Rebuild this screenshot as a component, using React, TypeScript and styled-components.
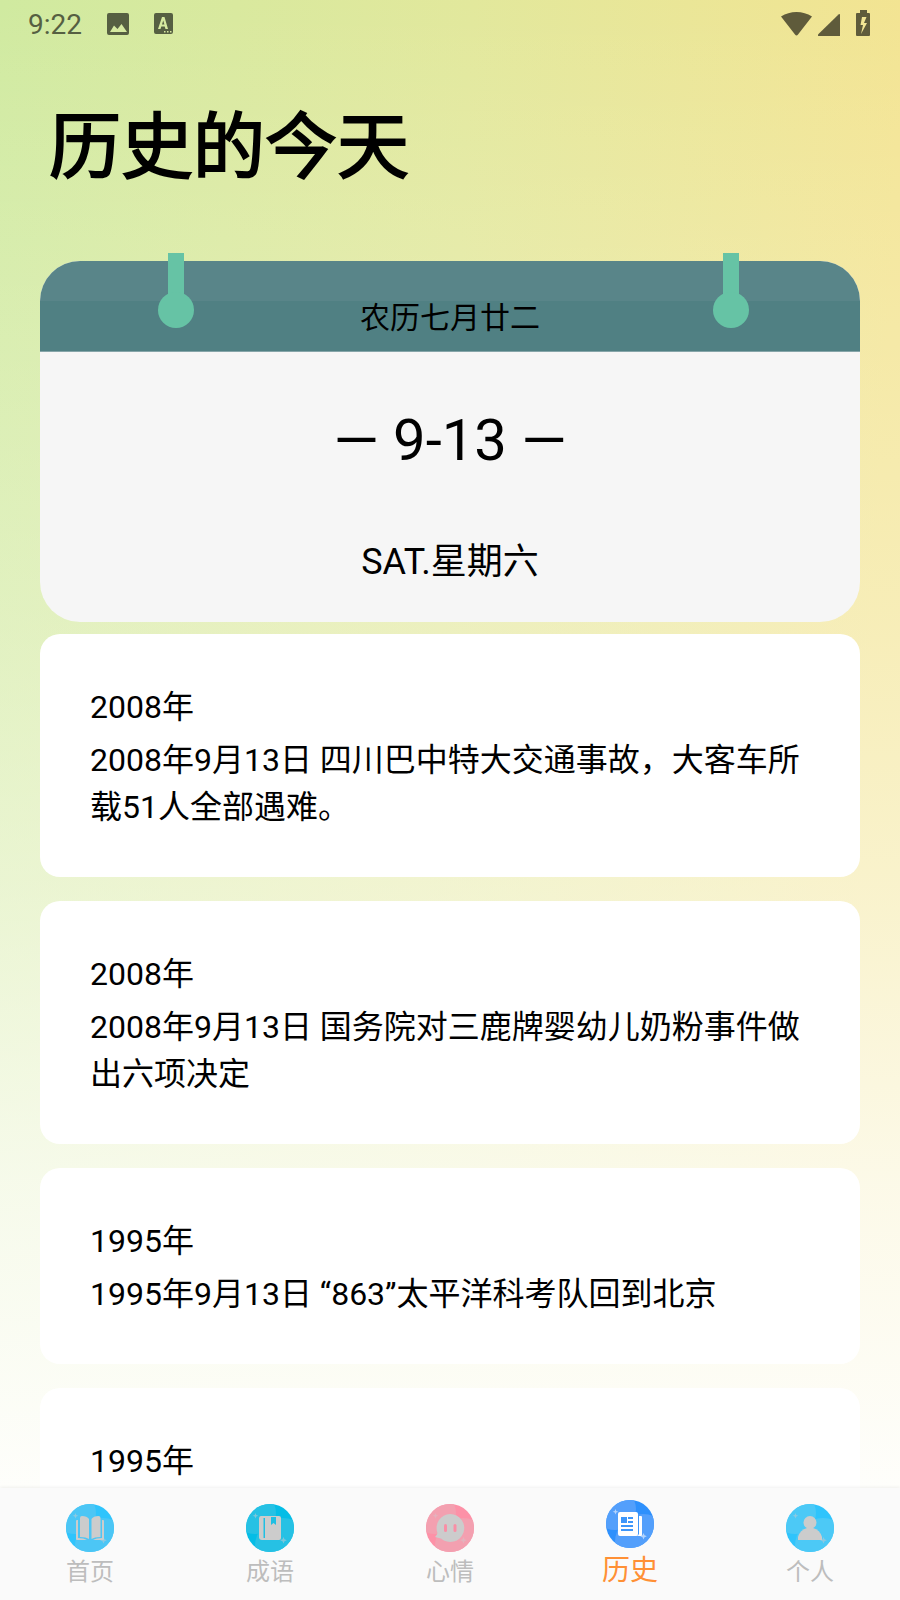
import React from "react";
import styled, { createGlobalStyle } from "styled-components";

const GlobalStyle = createGlobalStyle`
  * { box-sizing: border-box; }
  body {
    margin: 0;
    color: #000;
    font-family: Roboto, "Noto Sans CJK SC", sans-serif;
  }
`;

const Screen = styled.div`
  height: 100vh;
  display: flex;
  flex-direction: column;
  overflow: hidden;
  background:
    linear-gradient(180deg, rgba(254, 254, 251, 0) 0%, rgba(254, 254, 251, 0.14) 15%, rgba(254, 254, 251, 0.36) 39%, rgba(254, 254, 251, 0.56) 56%, rgba(254, 254, 251, 0.82) 74%, rgba(254, 254, 251, 1) 93%),
    linear-gradient(93deg, #d0eaa0 0%, #e2e89c 48%, #f3e492 92%);
`;

const StatusBar = styled.header`
  flex: none;
  height: 48px;
  padding: 0 24px 0 28px;
  display: flex;
  align-items: center;
  justify-content: space-between;
`;

const Notifications = styled.div`
  display: flex;
  align-items: center;
  gap: 24px;
  color: #565f42;
`;

const Indicators = styled.div`
  display: flex;
  align-items: flex-end;
  gap: 6px;
  padding-bottom: 2px;
  color: #5f5b3b;
`;

const Clock = styled.time`
  padding-top: 2px;
  font-size: 28px;
  line-height: 32px;
`;

const Title = styled.h1`
  flex: none;
  margin: 0;
  padding: 46px 49px 59px;
  font-size: 72px;
  font-weight: 400;
  line-height: 108px;
  -webkit-text-stroke: 2px #000;
`;

const Feed = styled.main`
  flex: 1;
  min-height: 0;
  overflow: hidden;
  padding: 0 40px;
  display: flex;
  flex-direction: column;
  gap: 24px;
`;

const Calendar = styled.section`
  flex: none;
  position: relative;
  margin: 0 40px 12px;
  border-radius: 40px;
  background: #f6f6f6;
  text-align: center;
`;

const CalendarHead = styled.div`
  height: 91px;
  padding-top: 34px;
  border-radius: 40px 40px 0 0;
  border-bottom: 1px solid #86a5a9;
  background: linear-gradient(#598589 40px, #508083 40px);
  font-size: 30px;
  line-height: 46px;
`;

const Pin = styled.span<{ $side: "left" | "right" }>`
  position: absolute;
  top: -8px;
  ${(p) => (p.$side === "left" ? "left: 118px" : "right: 111px")};
  display: flex;
  flex-direction: column;
  align-items: center;
  &::before {
    content: "";
    width: 16px;
    height: 44px;
    background: #66c3a5;
  }
  &::after {
    content: "";
    width: 36px;
    height: 36px;
    margin-top: -5px;
    border-radius: 50%;
    background: #66c3a5;
  }
`;

const DateText = styled.h2`
  margin: 0;
  padding-top: 46px;
  font-size: 58px;
  font-weight: 400;
  line-height: 84px;
`;

const Weekday = styled.p`
  margin: 0;
  padding: 53px 0 33px;
  font-size: 36px;
  line-height: 54px;
`;

const Event = styled.article`
  flex: none;
  padding: 50px 50px 46px;
  border-radius: 20px;
  background: #fff;
  font-size: 32px;
  line-height: 47px;
`;

const EventYear = styled.h2`
  margin: 0 0 6px;
  font-size: 32px;
  font-weight: 400;
`;

const EventText = styled.p`
  margin: 0;
`;

const TabBar = styled.nav`
  flex: none;
  height: 112px;
  display: flex;
  background: #fafafa;
  box-shadow: 0 -1px 3px rgba(0, 0, 0, 0.06);
`;

const Tab = styled.button<{ $active: boolean }>`
  flex: 1;
  padding: ${(p) => (p.$active ? 12 : 16)}px 0 0;
  border: 0;
  background: none;
  display: flex;
  flex-direction: column;
  align-items: center;
  gap: 2px;
  color: ${(p) => (p.$active ? "#ff9035" : "#bdbdbd")};
  font-family: inherit;
  font-size: ${(p) => (p.$active ? 28 : 24)}px;
  line-height: ${(p) => (p.$active ? 42 : 36)}px;
`;

type BadgeProps = { name: string; base: string; tint: string; spark: string; children: React.ReactNode };

function Badge({ name, base, tint, spark, children }: BadgeProps) {
  const id = `badge-${name}`;
  return (
    <svg width="48" height="48" viewBox="0 0 48 48" aria-hidden="true">
      <clipPath id={id}><circle cx="24" cy="24" r="24" /></clipPath>
      <g clipPath={`url(#${id})`}>
        <rect width="48" height="48" fill={base} />
        <circle cx="9" cy="9" r="21" fill={tint} />
        <circle cx="37" cy="42" r="28" fill={tint} />
      </g>
      <path d="M9.5 9l.8 2 2 .8-2 .8-.8 2-.8-2-2-.8 2-.8z" fill={spark} />
      <path d="M37.500 33l1 2.300 2.300 1-2.300 1-1 2.300-1-2.300-2.300-1 2.300-1z" fill={spark} />
      {children}
    </svg>
  );
}

const HomeIcon = () => (
  <Badge name="home" base="#2fc4fc" tint="#4cc6f5" spark="#8cc9e2">
    <g fill="#ccc">
      <path d="M14 14q0-2 2-2 5 0 7 3v20q-3-2-9-2z" />
      <path d="M34.500 14q0-2-2-2-5 0-7 3v20q3-2 9-2z" />
      <path d="M10 17q0-1 1-1h1v18q6 0 9 2H11q-1 0-1-1z" />
      <path d="M38 17q0-1-1-1h-1v18q-6 0-9 2h10q1 0 1-1z" />
    </g>
  </Badge>
);

const IdiomIcon = () => (
  <Badge name="idiom" base="#04bde6" tint="#26c1e4" spark="#7cc6da">
    <path fill="#ccc" d="M15 12h18q2 0 2 2v20q0 2-2 2H16q-3 0-3-3V15q0-3 2-3z" />
    <path fill="#1fbfe3" d="M17.500 14h1.500v20h-1.500zM25 13h5v8l-2.500-2-2.500 2z" />
  </Badge>
);

const MoodIcon = () => (
  <Badge name="mood" base="#fd91a7" tint="#f3a0b0" spark="#e3b2bd">
    <path fill="#ccc" d="M24 10a14 14 0 1 1-9 24.500L9 33q2-2 2.500-4A14 14 0 0 1 24 10z" />
    <rect x="18" y="20" width="3" height="8" rx="1.500" fill="#f98fa6" />
    <rect x="27.500" y="20" width="3" height="8" rx="1.500" fill="#f98fa6" />
  </Badge>
);

const HistoryIcon = () => (
  <Badge name="history" base="#2e90fc" tint="#539ffb" spark="#b3d4fd">
    <path fill="#fff" d="M14 12h16q2 0 2 2v20q0 2-2 2H14q-2 0-2-2V14q0-2 2-2zM33 16h2q1 0 1 1v18q0 1-1 1h-5q3 0 3-3z" />
    <path fill="#3d96fa" d="M32 15h1v19h-1z" />
    <path fill="#3d96fa" d="M15 17h6v6h-6zM22 17h5v2h-5zM22 21h5v2h-5zM15 25h12v2H15zM15 29h12v2H15z" />
  </Badge>
);

const ProfileIcon = () => (
  <Badge name="profile" base="#2fc4fc" tint="#4cc9f6" spark="#8cc9e2">
    <circle cx="24" cy="18.500" r="6.500" fill="#ccc" />
    <path fill="#ccc" d="M12 36v-3q2-7 9-9h6q7 2 9 9v3z" />
  </Badge>
);

const events = [
  { year: "2008年", text: "2008年9月13日 四川巴中特大交通事故，大客车所载51人全部遇难。" },
  { year: "2008年", text: "2008年9月13日 国务院对三鹿牌婴幼儿奶粉事件做出六项决定" },
  { year: "1995年", text: "1995年9月13日 “863”太平洋科考队回到北京" },
  { year: "1995年", text: "" },
];

const tabs = [
  { label: "首页", Icon: HomeIcon },
  { label: "成语", Icon: IdiomIcon },
  { label: "心情", Icon: MoodIcon },
  { label: "历史", Icon: HistoryIcon, active: true },
  { label: "个人", Icon: ProfileIcon },
];

export default function App() {
  return (
    <>
      <GlobalStyle />
      <Screen>
        <StatusBar>
          <Notifications>
            <Clock>9:22</Clock>
            <svg width="24" height="24" viewBox="0 0 24 24" aria-hidden="true">
              <path fill="currentColor" fillRule="evenodd" d="M3 1h18q2 0 2 2v18q0 2-2 2H3q-2 0-2-2V3q0-2 2-2zM4 20h17l-5.500-8-4 5L8 13.500z" />
            </svg>
            <svg width="20" height="22" viewBox="0 0 20 22" aria-hidden="true">
              <path fill="currentColor" fillRule="evenodd" d="M2 0h15q2 0 2 2v17q0 2-2 2H2q-2 0-2-2V2q0-2 2-2zM8 4L4 16h2.500l.8-2.500h3.400l.8 2.500H14L10.500 4zM8 11.500l1.200-4 1.200 4zM10 18v1.500h1.500V18zM13 18v1.500h1.500V18zM16 18v1.500h1.500V18z" />
            </svg>
          </Notifications>
          <Indicators>
            <svg width="31" height="26" viewBox="0 0 31 26" aria-hidden="true">
              <path fill="currentColor" d="M0 6.500Q7 2 15.500 2T31 6.500L17 24.500q-1.500 2-3 0z" />
            </svg>
            <svg width="22" height="24" viewBox="0 0 22 24" aria-hidden="true">
              <path fill="currentColor" d="M20.500 2.500Q22 1.500 22 3v21H1q-2 0-.5-2z" />
            </svg>
            <svg width="30" height="26" viewBox="0 0 30 26" aria-hidden="true">
              <path fill="currentColor" fillRule="evenodd" d="M14 0h7v3h2q1 0 1 1v21q0 1-1 1H11q-1 0-1-1V4q0-1 1-1h3zM16 7l-1.500 8H17l-2 9 6-11h-3l2.500-6z" />
            </svg>
          </Indicators>
        </StatusBar>
        <Title>历史的今天</Title>
        <Calendar>
          <CalendarHead>农历七月廿二</CalendarHead>
          <Pin $side="left" />
          <Pin $side="right" />
          <DateText>— 9-13 —</DateText>
          <Weekday>SAT.星期六</Weekday>
        </Calendar>
        <Feed>
          {events.map((e, i) => (
            <Event key={i}>
              <EventYear>{e.year}</EventYear>
              <EventText>{e.text}</EventText>
            </Event>
          ))}
        </Feed>
        <TabBar>
          {tabs.map(({ label, Icon, active }) => (
            <Tab key={label} type="button" $active={!!active} aria-current={active ? "page" : undefined}>
              <Icon />
              {label}
            </Tab>
          ))}
        </TabBar>
      </Screen>
    </>
  );
}
